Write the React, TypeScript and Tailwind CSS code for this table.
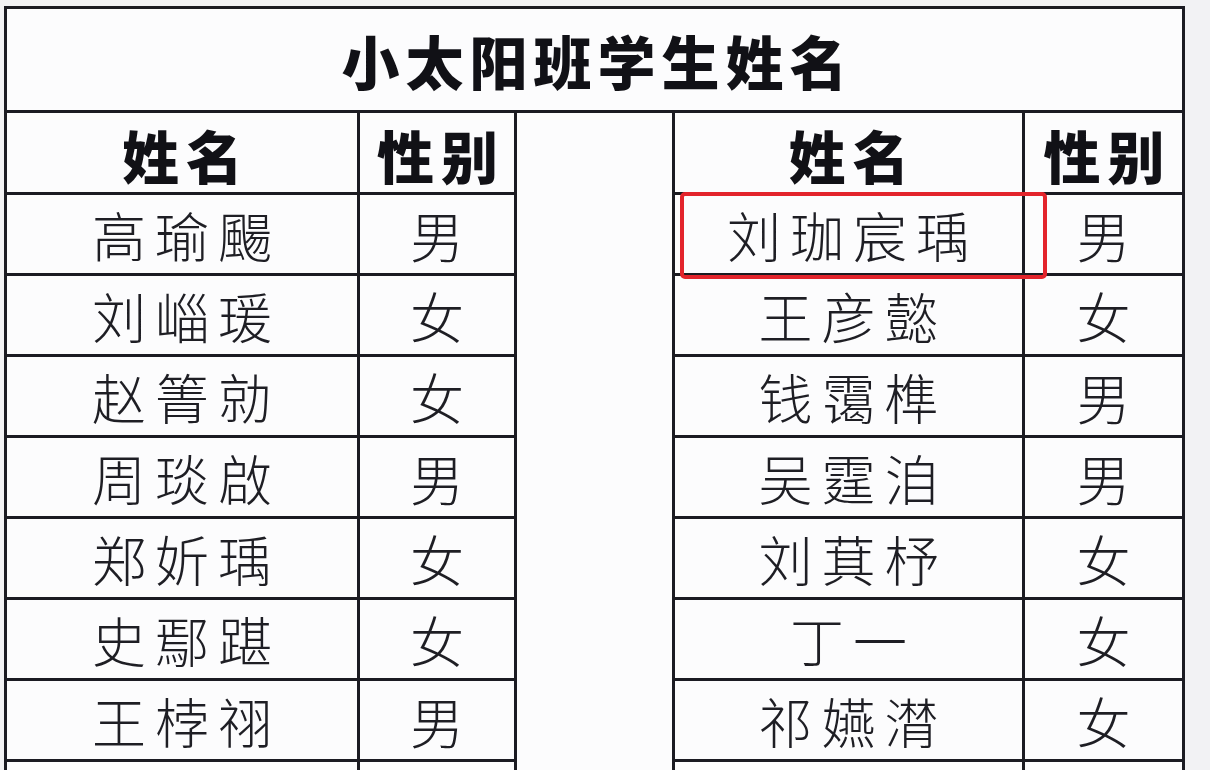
const left = [
  ['高瑜颺', '男'],
  ['刘崰瑗', '女'],
  ['赵箐勍', '女'],
  ['周琰啟', '男'],
  ['郑妡瑀', '女'],
  ['史鄢踸', '女'],
  ['王桲祤', '男'],
  ['', ''],
];

const right = [
  ['刘珈宸瑀', '男'],
  ['王彦懿', '女'],
  ['钱霭榫', '男'],
  ['吴霆洎', '男'],
  ['刘萁杼', '女'],
  ['丁一', '女'],
  ['祁嬿潸', '女'],
  ['', ''],
];

const font = { fontFamily: '"Noto Sans CJK SC", "Noto Sans", sans-serif' };

const Cell = ({ text, head }: { text: string; head?: boolean }) => (
  <div
    className={
      head
        ? 'flex items-center justify-center bg-[#fcfcfd] pt-[4px] pl-[8px] text-[57px] font-black leading-none tracking-[7px] text-[#111116]'
        : 'flex items-center justify-center bg-[#fcfcfd] pt-[2px] pl-[9px] text-[54px] font-light leading-none tracking-[9px] text-[#1e1e24]'
    }
  >
    {text}
  </div>
);

const App = () => {
  return (
    <div className="h-[770px] w-[1210px] overflow-hidden bg-[#f2f2f4] pl-[4px] pt-[6px]" style={font}>
      <div className="relative w-[1181px]">
        <div className="grid grid-cols-[350px_154px_155px_347px_157px] grid-rows-[101px_79px_repeat(8,78px)] gap-[3px] bg-[#1b1b22] p-[3px]">
          <div className="col-span-5 flex items-center justify-center bg-[#fcfcfd] pl-[6px] text-[58px] font-black leading-none tracking-[6px] text-[#111116]">
            小太阳班学生姓名
          </div>

          <Cell text="姓名" head />
          <Cell text="性别" head />
          <div className="row-span-9 bg-[#fcfcfd]" />
          <Cell text="姓名" head />
          <Cell text="性别" head />

          {left.map((row, i) => (
            <div key={i} className="contents">
              <Cell text={row[0]} />
              <Cell text={row[1]} />
              <Cell text={right[i][0]} />
              <Cell text={right[i][1]} />
            </div>
          ))}
        </div>

        <div className="absolute left-[676px] top-[186px] h-[87px] w-[367px] rounded-[5px] border-[4px] border-[#e3242c]" />
      </div>
    </div>
  );
};

export default App;
